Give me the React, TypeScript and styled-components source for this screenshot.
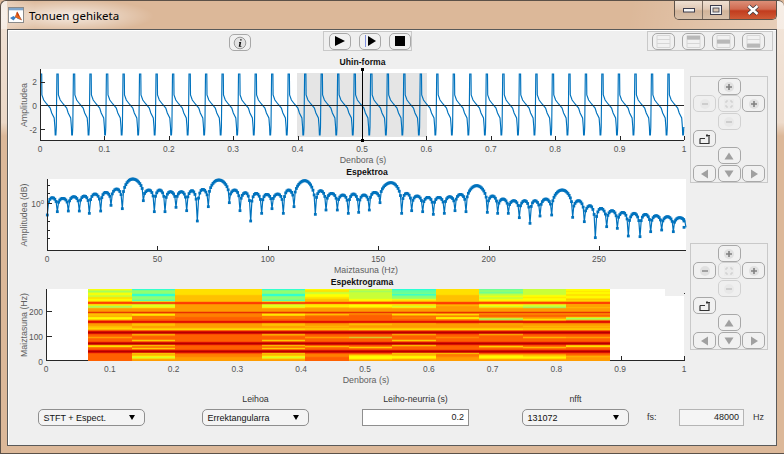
import React from "react";
import styled, { createGlobalStyle } from "styled-components";

const Global = createGlobalStyle`
  html, body { margin: 0; padding: 0; background: #dcb899; overflow: hidden; }
  * { box-sizing: border-box; }
`;

const Window = styled.div`
  width: 784px;
  height: 454px;
  display: flex;
  flex-direction: column;
  padding: 0 7px 7px 6px;
  border-radius: 6px 6px 0 0;
  border: 1px solid #5c5148;
  border-width: 1px 0 1px 1px;
  background:
    radial-gradient(ellipse 85px 17px at 68px 15px, rgba(255, 255, 255, 0.72), rgba(255, 255, 255, 0) 100%),
    linear-gradient(100deg, rgba(255, 255, 255, 0) 80%, rgba(255, 255, 255, 0.32) 100%) top / 100% 28px no-repeat,
    linear-gradient(180deg, rgba(255, 255, 255, 0.6), rgba(255, 255, 255, 0.45) 90%, rgba(255, 255, 255, 0)) left top / 6px 135px no-repeat,
    linear-gradient(180deg, rgba(255, 255, 255, 0.65), rgba(255, 255, 255, 0.5) 90%, rgba(255, 255, 255, 0)) right top / 7px 135px no-repeat,
    linear-gradient(90deg, rgba(255, 255, 255, 0.4), rgba(255, 255, 255, 0) 34px) top / 100% 28px no-repeat,
    #dcb899;
`;

const TitleBar = styled.div`
  height: 28px;
  flex: none;
  display: flex;
  align-items: flex-start;
  padding-left: 1px;
`;

const AppIcon = styled.svg`
  width: 16px;
  height: 16px;
  margin-top: 6px;
  flex: none;
`;

const TitleText = styled.span`
  font: 11.5px "Noto Sans", sans-serif;
  color: #000;
  margin: 6px 0 0 5px;
  line-height: 17px;
`;

const WinControls = styled.div`
  margin-left: auto;
  display: flex;
  height: 19px;
  border: 1px solid #5c5148;
  border-top: 0;
  border-radius: 0 0 5px 5px;
  overflow: hidden;
`;

const WinButton = styled.div<{ $w: number; $close?: boolean }>`
  width: ${(p) => p.$w}px;
  display: flex;
  align-items: center;
  justify-content: center;
  border-right: 1px solid #7b6c60;
  background: ${(p) =>
    p.$close
      ? "linear-gradient(180deg,#dc8f78 0,#d06a50 45%,#c23c1e 55%,#cf5b36 100%)"
      : "linear-gradient(180deg,#efe0d2 0,#e0c8b4 45%,#d2b49a 55%,#d8c0aa 100%)"};
  &:last-child { border-right: 0; }
`;

const Panel = styled.div`
  flex: 1;
  display: flex;
  flex-direction: column;
  background: #efefef;
  border: 1px solid #5a5a5a;
  box-shadow: inset 0 1px 0 #fff, inset 1px 0 0 #fff;
  width: 770px;
`;

const TopBar = styled.div`
  height: 26px;
  flex: none;
  display: flex;
  align-items: flex-start;
  padding: 1px 3px 0 221px;
`;

const ToolGroup = styled.div<{ $ml: string; $pad: number; $gap: number }>`
  height: 20px;
  display: flex;
  align-items: center;
  gap: ${(p) => p.$gap}px;
  padding-left: ${(p) => p.$pad}px;
  margin-left: ${(p) => p.$ml};
  border: 1px solid #c9c9c9;
`;

const ToolButton = styled.div<{ $w?: number; $dim?: boolean; $mt?: number }>`
  width: ${(p) => p.$w ?? 23}px;
  height: 17px;
  flex: none;
  display: flex;
  align-items: center;
  justify-content: center;
  border: 1px solid #a8a8a8;
  border-radius: 5px;
  background: #f1f1f1;
  margin-top: ${(p) => p.$mt ?? 0}px;
  opacity: ${(p) => (p.$dim ? 0.42 : 1)};
`;

const Workspace = styled.div`
  height: 332px;
  flex: none;
  display: flex;
`;

const ChartColumn = styled.div`
  width: 680px;
  flex: none;
  display: flex;
  flex-direction: column;
`;

const ChartSvg = styled.svg<{ $h: number }>`
  display: block;
  width: 680px;
  height: ${(p) => p.$h}px;
  flex: none;
`;

const SideColumn = styled.div`
  display: flex;
  flex-direction: column;
  gap: 60px;
  margin-left: 2px;
  padding-top: 20px;
`;

const NavPanel = styled.div`
  width: 78px;
  height: 107px;
  border: 1px solid #c9c9c9;
  padding: 1px 2px 0;
  display: grid;
  grid-template-columns: repeat(3, 24.5px);
  grid-template-rows: 17px 17px 18px 17px 18px 17px;
`;

const NavCell = styled.div<{ $c: number; $r: number }>`
  grid-column: ${(p) => p.$c};
  grid-row: ${(p) => p.$r};
`;

const Controls = styled.div`
  flex: 1;
  display: flex;
  align-items: flex-end;
  padding: 0 0 19px 30px;
`;

const Field = styled.div<{ $ml?: number; $w: number }>`
  width: ${(p) => p.$w}px;
  margin-left: ${(p) => p.$ml ?? 0}px;
  display: flex;
  flex-direction: column;
  flex: none;
`;

const FieldLabel = styled.div`
  font: 8.8px/12px "Liberation Sans", Arial, sans-serif;
  color: #333;
  text-align: center;
  margin-bottom: 4px;
`;

const Select = styled.div`
  height: 17px;
  display: flex;
  align-items: center;
  justify-content: space-between;
  padding: 0 9px 0 4.5px;
  border: 1px solid #8f8f8f;
  border-radius: 5px;
  background: #f4f4f4;
  font: 9px "Liberation Sans", Arial, sans-serif;
  color: #111;
`;

const Caret = styled.span`
  width: 0;
  height: 0;
  border-left: 3.5px solid transparent;
  border-right: 3.5px solid transparent;
  border-top: 5px solid #000;
`;

const ValueBox = styled.div<{ $w?: number; $ml?: number; $muted?: boolean }>`
  height: 17px;
  width: ${(p) => (p.$w ? `${p.$w}px` : "auto")};
  margin-left: ${(p) => p.$ml ?? 0}px;
  flex: none;
  padding: 0 4px;
  border: 1px solid ${(p) => (p.$muted ? "#b5b5b5" : "#8f8f8f")};
  background: ${(p) => (p.$muted ? "#f5f5f5" : "#fff")};
  text-align: right;
  font: 9px/15px "Liberation Sans", Arial, sans-serif;
  color: #222;
`;

const InlineLabel = styled.span<{ $w: number; $ml: number }>`
  width: ${(p) => p.$w}px;
  margin-left: ${(p) => p.$ml}px;
  flex: none;
  height: 17px;
  font: 9px/17px "Liberation Sans", Arial, sans-serif;
  color: #333;
`;

const TickText = styled.text`
  font: 8.4px "Liberation Sans", Arial, sans-serif;
  fill: #555;
`;

const AxisLabel = styled.text`
  font: 8.8px "Liberation Sans", Arial, sans-serif;
  fill: #606060;
  text-anchor: middle;
`;

const AxisTitle = styled.text`
  font: bold 8.6px "Liberation Sans", Arial, sans-serif;
  fill: #111;
  text-anchor: middle;
`;

const BLUE = "#0072bd";
const AX = "#262626";

/* ---------- waveform ---------- */
const PERIOD = 644 / 39;
const SHAPE: [number, number][] = [
  [0, 74], [1, 74], [1.2, 95], [3, 100], [6, 104], [9.5, 108], [11, 113], [13.5, 118],
  [14.2, 127], [14.5, 135], [15.2, 135], [15.6, 127], [16.2, 74],
];
function wavePoints() {
  const pts: string[] = [];
  for (let k = 0; k < 39; k++) {
    const x0 = 40.7 + k * PERIOD;
    for (const [t, y] of SHAPE) {
      const x = x0 + t;
      if (x > 684) {
        pts.push(`684,128`);
        return pts.join(" ");
      }
      pts.push(`${x.toFixed(1)},${y}`);
    }
  }
  return pts.join(" ");
}

/* ---------- spectrum ---------- */
const a = (zx: number, zy: number, top: number): [number, number, number] => [zx / 3, 160 + zy / 3, 160 + top / 3];
const b = (zx: number, zy: number, top: number): [number, number, number] => [400 + zx / 3, 170 + zy / 3, 170 + top / 3];
const LOBES: [number, number, number][] = [
  a(142, 165, 113), a(172, 155, 115), a(205, 153, 110), a(238, 153, 108), a(268, 160, 102),
  a(302, 153, 97), a(333, 136, 87), a(367, 146, 57), a(430, 122, 90), a(463, 155, 90),
  a(495, 155, 95), a(528, 142, 95), a(560, 152, 92), a(592, 183, 88), a(625, 140, 60),
  a(688, 128, 90), a(720, 152, 98), a(752, 183, 100), a(785, 160, 103), a(816, 146, 102),
  a(850, 160, 90), a(882, 140, 62), a(946, 163, 92), a(978, 150, 100), a(1012, 150, 105),
  a(1045, 160, 102), a(1076, 157, 105), a(1108, 150, 97), a(1140, 128, 68),
  b(5, 130, 70), b(35, 122, 78), b(68, 125, 82), b(100, 133, 82), b(133, 130, 80),
  b(165, 122, 73), b(198, 125, 47), b(262, 127, 78), b(293, 130, 87), b(325, 130, 92),
  b(358, 143, 92), b(390, 160, 92), b(420, 138, 87), b(455, 135, 60), b(518, 142, 92),
  b(553, 155, 107), b(586, 203, 115), b(620, 170, 122), b(652, 175, 127), b(685, 198, 130),
  b(720, 200, 133), b(752, 185, 137), b(785, 180, 140), b(820, 185, 143), b(858, 172, 0),
];
function spectrum() {
  const pts: [number, number][] = [];
  for (let i = 0; i < LOBES.length - 1; i++) {
    const [x0, y0, top] = LOBES[i];
    const [x1, y1] = LOBES[i + 1];
    const n = Math.max(8, Math.round((x1 - x0) / 1.2));
    for (let j = 0; j < n; j++) {
      const t = j / n;
      const base = y0 + (y1 - y0) * t;
      const s = Math.pow(Math.sin(Math.PI * t), 0.32);
      pts.push([x0 + (x1 - x0) * t, base + (top - base) * s]);
    }
  }
  pts.push([LOBES[LOBES.length - 1][0], LOBES[LOBES.length - 1][1]]);
  return pts;
}
const SPEC = spectrum();

/* ---------- spectrogram ---------- */
const PALETTE: Record<string, [number, number, number]> = {
  "0": [160, 0, 0], "1": [220, 0, 0], "2": [255, 40, 0], "3": [255, 96, 0], "4": [255, 128, 0], "5": [255, 156, 0],
  "6": [255, 192, 0], "7": [255, 224, 0], "8": [255, 255, 0], "9": [200, 255, 56], a: [144, 255, 112], b: [96, 255, 160], c: [32, 255, 224],
};
const rle = (s: string) =>
  s.split(" ").map((t) => {
    const [c, n] = t.split("*");
    return c.repeat(n ? Number(n) : 1);
  }).join("").replace(/000/g, "101");

const MID = "5*4 1";
const TYPES: Record<string, string> = {
  A: rle(`8 9 a 9 8 8 9 9 7 7 8 8 6 2*2 8 7 a 9 ${MID} 6*3 5 8 8 7 3 1*2 5*3 6*2 7 6 3 0*3 3*3 6 3*4 0*3 7 8 3*3 0*3 3 3*3 3*4`),
  B: rle(`c a a a a c c a a a a c 8 2*2 9 8 9 8 ${MID} 5 8 7 3 4 4 3 3 1*2 6*3 5 5 6 8 3 0*3 7 4 3*4 8 3 0*3 8 3 3 8 3 0*3 8 5 6 8 9 7 5 5`),
  C: rle(`7*6 6*7 2*2 5*8 1 4*4 3*4 1*2 5*5 6 8 3 0*3 3*8 0*3 3*5 0*3 3 4*3 5*4`),
  D: rle(`9 9 a 9 9 9 9 9 9 9 8 8 6 2*2 8 8 8 7 ${MID} 5 4 3 3 3*4 1*2 6 6 5 5 5 6 8 3 0*3 3*3 9 3*4 0*3 3 3 8 3 3 0*3 3 5 7 8*3 6 5`),
  E: rle(`c b b b a c b a a a 8 7 6 2*2 8 7 9 8 ${MID} 5 8 5 3 4 4 3 3 1*2 6 5 5 5 5 6 8 3 0*3 7 3*5 8 3 0*3 8 3 3 3 3 0*3 8 5 6 8 8 7 5 5`),
  F: rle(`8 7 7 9 9 8 8 8 7 7 6 6 6 2*2 8 7 8 6 ${MID} 4 7 4 3 3*4 1*2 5*3 6 5 6 7 3 0*3 3*3 6 3*4 0*3 3 7 3*3 0*3 3 4*3 3*4`),
  G: rle(`b a a b a 9 9 8 9 9 8 8 6 2*2 8 8 9 7 ${MID} 5 4 3 3 5 9 a 4 1*2 6 5 5 5 5 6 8 3 0*3 7 3*7 0*3 3 8 4 3 3 0*3 3 5 7 8 8 7 5 5`),
  H: rle(`9 9 9 9 9 9 8 8 7 8 8 8 6 2*2 8 9 9 a ${MID} 5 4 3 3 5 5 8 5 1*2 5*3 6 5 6 7 3 0*3 3*3 7 3*4 0*3 3 3 7 3 3 0*3 3 5 6 7 8 7 5 5`),
  I: rle(`8 8 7 8 8 7 7 8 8 7 6 7 6 2*2 6 5 5 6 ${MID} 5 4 3 3 8 a 9 3 1*2 5*3 6 5 6 7 3 0*3 3*3 6 3*4 0*3 7 8 3*3 0*3 3 3 4 6 5 5 5 5`),
  J: rle(`7*6 6*7 2*2 5 6 5 5 5*4 1 4 8 5 3 8 8 4 3 1*2 5*5 6 8 3 0*3 3*3 5 3*4 0*3 3*5 0*3 8 3 4 4 5*4`),
};
const rowColour = (s: string, r: number) => {
  const p = (i: number) => PALETTE[s[Math.max(0, Math.min(71, i))]];
  const [u, m, d] = [p(r - 1), p(r), p(r + 1)];
  const mix = (k: number) => Math.round(u[k] * 0.17 + m[k] * 0.66 + d[k] * 0.17);
  return `rgb(${mix(0)},${mix(1)},${mix(2)})`;
};
const BOUNDS = [88, 132, 175, 262, 305, 349, 392, 436, 479, 523, 566, 610];
const COLS = ["A", "B", "C", "B", "F", "D", "E", "J", "G", "H", "I"];

const Spectrogram = () => (
  <g shapeRendering="crispEdges">
    {COLS.map((k, ci) =>
      Array.from({ length: 72 }, (_, r) => (
        <rect key={`${ci}-${r}`} x={BOUNDS[ci]} y={289 + r} width={BOUNDS[ci + 1] - BOUNDS[ci]} height={1} fill={rowColour(TYPES[k], r)} />
      ))
    )}
  </g>
);

/* ---------- chart parts ---------- */
const XTicks = ({ items, axisY }: { items: [string, number][]; axisY: number }) => (
  <>
    {items.map(([l, x]) => (
      <TickText key={l} x={x} y={axisY + 12} textAnchor="middle">{l}</TickText>
    ))}
  </>
);

const WaveChart = () => {
  const ticks: [string, number][] = ["0", "0.1", "0.2", "0.3", "0.4", "0.5", "0.6", "0.7", "0.8", "0.9", "1"].map((l, i) => [l, 40 + i * 64.4]);
  return (
    <ChartSvg $h={112} viewBox="8 56 680 112">
      <rect x={40} y={69} width={644} height={71} fill="#fff" />
      <rect x={297} y={73} width={130} height={64} fill="#e5e5e5" />
      <AxisTitle x={362.5} y={65}>Uhin-forma</AxisTitle>
      <polyline points={wavePoints()} fill="none" stroke={BLUE} strokeWidth={1.15} />
      <g stroke={AX} shapeRendering="crispEdges">
        <line x1={40} y1={105.5} x2={684} y2={105.5} />
        <line x1={40.5} y1={69} x2={40.5} y2={141} />
        <line x1={40} y1={140.5} x2={684} y2={140.5} />
        {ticks.map(([l, x]) => (
          <line key={l} x1={Math.round(x) + 0.5} y1={136} x2={Math.round(x) + 0.5} y2={140} />
        ))}
        {[82, 105, 129].map((y) => (
          <line key={y} x1={41} y1={y + 0.5} x2={45} y2={y + 0.5} />
        ))}
      </g>
      <g fill="#000" shapeRendering="crispEdges">
        <rect x={361.5} y={69} width={1.2} height={71} />
        <rect x={360.5} y={68} width={3} height={3} />
        <rect x={360.5} y={139} width={3} height={3} />
      </g>
      <TickText x={37} y={85} textAnchor="end">2</TickText>
      <TickText x={37} y={109} textAnchor="end">0</TickText>
      <TickText x={37} y={133} textAnchor="end">-2</TickText>
      <XTicks items={ticks} axisY={140} />
      <AxisLabel x={363} y={163}>Denbora (s)</AxisLabel>
      <AxisLabel x={27} y={105} transform="rotate(-90 27 105)">Amplitudea</AxisLabel>
    </ChartSvg>
  );
};

const SpectrumChart = () => {
  const ticks: [string, number][] = ["0", "50", "100", "150", "200", "250"].map((l, i) => [l, 47 + i * 110.4]);
  return (
    <ChartSvg $h={110} viewBox="8 168 680 110">
      <rect x={47} y={179} width={639} height={71} fill="#fff" />
      <AxisTitle x={367} y={175}>Espektroa</AxisTitle>
      <polyline points={SPEC.map(([x, y]) => `${x.toFixed(1)},${y.toFixed(1)}`).join(" ")} fill="none" stroke={BLUE} strokeWidth={1.2} />
      <g fill={BLUE}>
        {SPEC.map(([x, y], i) => (
          <rect key={i} x={Math.min(x, 684) - 1.4} y={y - 1.4} width={2.8} height={2.8} />
        ))}
      </g>
      <g stroke={AX} shapeRendering="crispEdges">
        <line x1={47.5} y1={179} x2={47.5} y2={251} />
        <line x1={47} y1={250.5} x2={686} y2={250.5} />
        {ticks.map(([l, x]) => (
          <line key={l} x1={Math.round(x) + 0.5} y1={246} x2={Math.round(x) + 0.5} y2={250} />
        ))}
        {[185, 193, 203, 221, 230, 238].map((y) => (
          <line key={y} x1={48} y1={y + 0.5} x2={y === 203 ? 52 : 50} y2={y + 0.5} />
        ))}
      </g>
      <TickText x={44} y={206.5} textAnchor="end">10<tspan fontSize={6} dy={-3}>0</tspan></TickText>
      <XTicks items={ticks} axisY={250} />
      <AxisLabel x={366} y={273}>Maiztasuna (Hz)</AxisLabel>
      <AxisLabel x={27} y={215} transform="rotate(-90 27 215)">Amplitudea (dB)</AxisLabel>
    </ChartSvg>
  );
};

const GramChart = () => {
  const ticks: [string, number][] = ["0", "0.1", "0.2", "0.3", "0.4", "0.5", "0.6", "0.7", "0.8", "0.9", "1"].map((l, i) => [l, 46 + i * 63.8]);
  return (
    <ChartSvg $h={110} viewBox="8 278 680 110">
      <rect x={46} y={289} width={638} height={72} fill="#fff" />
      <rect x={665} y={289} width={20} height={7} fill="#efefef" />
      <rect x={684} y={293} width={1} height={1} fill="#333" />
      <AxisTitle x={362} y={285}>Espektrograma</AxisTitle>
      <g stroke={AX} shapeRendering="crispEdges">
        <line x1={46.5} y1={289} x2={46.5} y2={361} />
        <line x1={46} y1={360.5} x2={685} y2={360.5} />
        <line x1={621.5} y1={356} x2={621.5} y2={360} />
        <line x1={684.5} y1={356} x2={684.5} y2={360} />
        <line x1={47} y1={311.5} x2={52} y2={311.5} />
        <line x1={47} y1={336.5} x2={52} y2={336.5} />
      </g>
      <Spectrogram />
      <TickText x={43} y={314.5} textAnchor="end">200</TickText>
      <TickText x={43} y={339.5} textAnchor="end">100</TickText>
      <TickText x={43} y={364.5} textAnchor="end">0</TickText>
      <XTicks items={ticks} axisY={360} />
      <AxisLabel x={366} y={383}>Denbora (s)</AxisLabel>
      <AxisLabel x={27} y={325} transform="rotate(-90 27 325)">Maiztasuna (Hz)</AxisLabel>
    </ChartSvg>
  );
};

/* ---------- icons ---------- */
const Ic = ({ children, w = 14, h = 12 }: { children: React.ReactNode; w?: number; h?: number }) => (
  <svg width={w} height={h} viewBox={`0 0 ${w} ${h}`}>{children}</svg>
);
const ZoomIn = () => (
  <Ic>
    <circle cx={7} cy={6} r={5} fill="#e0e0e0" />
    <path d="M7 3v6M4 6h6" stroke="#808080" strokeWidth={1.6} />
  </Ic>
);
const ZoomOut = () => (
  <Ic>
    <circle cx={7} cy={6} r={5} fill="#e0e0e0" />
    <path d="M4 6h6" stroke="#909090" strokeWidth={1.6} />
  </Ic>
);
const Fit = () => (
  <Ic>
    <rect x={2} y={1} width={10} height={10} fill="#e6e6e6" />
    <path d="M4 5V3h2M8 3h2v2M10 7v2H8M6 9H4V7" fill="none" stroke="#9a9a9a" />
  </Ic>
);
const Arrow = ({ d }: { d: string }) => (
  <Ic>
    <path d={d} fill="#a0a0a0" />
  </Ic>
);
const Export = () => (
  <Ic>
    <path d="M2 5.5h5M2 5.5v5h9V2.5M8 2.5h4" fill="none" stroke="#333" strokeWidth={1.2} />
    <path d="M9 1v3" stroke="#333" strokeWidth={1} />
  </Ic>
);

const Nav = ({ fitDim = true, leftDim }: { fitDim?: boolean; leftDim: boolean }) => (
  <NavPanel>
    <NavCell $c={2} $r={1}><ToolButton><ZoomIn /></ToolButton></NavCell>
    <NavCell $c={1} $r={2}><ToolButton $dim={leftDim}><ZoomOut /></ToolButton></NavCell>
    <NavCell $c={2} $r={2}><ToolButton $dim={fitDim}><Fit /></ToolButton></NavCell>
    <NavCell $c={3} $r={2}><ToolButton><ZoomIn /></ToolButton></NavCell>
    <NavCell $c={2} $r={3}><ToolButton $dim $mt={1}><ZoomOut /></ToolButton></NavCell>
    <NavCell $c={1} $r={4}><ToolButton><Export /></ToolButton></NavCell>
    <NavCell $c={2} $r={5}><ToolButton><Arrow d="M7 2.5l4.5 7h-9z" /></ToolButton></NavCell>
    <NavCell $c={1} $r={6}><ToolButton><Arrow d="M3 6l7-4.5v9z" /></ToolButton></NavCell>
    <NavCell $c={2} $r={6}><ToolButton><Arrow d="M7 9.5l-4.5-7h9z" /></ToolButton></NavCell>
    <NavCell $c={3} $r={6}><ToolButton><Arrow d="M11 6L4 1.5v9z" /></ToolButton></NavCell>
  </NavPanel>
);

const Rows = ({ fill }: { fill: number }) => (
  <Ic w={15} h={13}>
    <path d="M1 .5h13v12H1zM1 4.5h13M1 8.5h13" fill="none" stroke="#d6d6d6" />
    {fill >= 0 && <rect x={1} y={1 + fill * 4} width={13} height={3.4} fill="#b8b8b8" />}
  </Ic>
);

export default function App() {
  return (
    <>
      <Global />
      <Window>
        <TitleBar>
          <AppIcon viewBox="0 0 16 16">
            <rect x={0.5} y={0.5} width={15} height={15} fill="#eaf0f6" stroke="#8a8a8a" />
            <rect x={1} y={1} width={14} height={2.5} fill="#7fa6cc" />
            <rect x={1} y={3.5} width={14} height={11.5} fill="#fff" />
            <path d="M2 11l3.5-2 1.5 1 2-5 1 1.5L14 13l-4-1-2-1.5-2.5 3z" fill="#3b7fc4" />
            <path d="M7 10l2-5.5 1 1.5L14 13.5l-3-1.5z" fill="#e8641b" />
            <path d="M9 4.5l1 1.5 1.5 4-2-2z" fill="#b8320f" />
          </AppIcon>
          <TitleText>Tonuen gehiketa</TitleText>
          <WinControls>
            <WinButton $w={28}>
              <svg width={12} height={6}><rect x={0.5} y={1.5} width={11} height={3.5} fill="#f6f6f6" stroke="#3c3c4c" /></svg>
            </WinButton>
            <WinButton $w={27}>
              <svg width={12} height={10}><rect x={0.5} y={0.5} width={11} height={9} fill="#f1f1f1" stroke="#3c3c4c" /><rect x={3} y={3} width={6} height={4} fill="#d8c4b0" stroke="#3c3c4c" strokeWidth={0.8} /></svg>
            </WinButton>
            <WinButton $w={46} $close>
              <svg width={14} height={12}><path d="M2.5 2l9 8M11.5 2l-9 8" stroke="#39393f" strokeWidth={4} /><path d="M2.5 2l9 8M11.5 2l-9 8" stroke="#fff" strokeWidth={2.4} /></svg>
            </WinButton>
          </WinControls>
        </TitleBar>
        <Panel>
          <TopBar>
            <ToolButton $w={22} $mt={3}>
              <Ic w={14} h={14}>
                <circle cx={7} cy={7} r={5.8} fill="#e2e2e2" stroke="#9a9a9a" />
                <path d="M7.2 3.2h1.4v1.4H7.2zM6 6h2.2L7.4 10h1v.8H5.7l.8-4H6z" fill="#111" />
              </Ic>
            </ToolButton>
            <ToolGroup $ml="72px" $pad={5} $gap={8}>
              <ToolButton $w={22}><Ic><path d="M2 1l10 5-10 5z" fill="#000" /></Ic></ToolButton>
              <ToolButton $w={22}>
                <Ic><path d="M2.5 0v12" stroke="#8090e0" /><path d="M5 1l8 5-8 5z" fill="#000" /></Ic>
              </ToolButton>
              <ToolButton $w={22}><Ic><rect x={2} y={1} width={10} height={10} fill="#000" /></Ic></ToolButton>
            </ToolGroup>
            <ToolGroup $ml="auto" $pad={4} $gap={7}>
              <ToolButton><Rows fill={-1} /></ToolButton>
              <ToolButton><Rows fill={0} /></ToolButton>
              <ToolButton><Rows fill={1} /></ToolButton>
              <ToolButton><Rows fill={2} /></ToolButton>
              <span style={{ width: 0 }} />
            </ToolGroup>
          </TopBar>
          <Workspace>
            <ChartColumn>
              <WaveChart />
              <SpectrumChart />
              <GramChart />
            </ChartColumn>
            <SideColumn>
              <Nav leftDim />
              <Nav leftDim={false} />
            </SideColumn>
          </Workspace>
          <Controls>
            <Field $w={107}>
              <Select>STFT + Espect.<Caret /></Select>
            </Field>
            <Field $w={107} $ml={57}>
              <FieldLabel>Leihoa</FieldLabel>
              <Select>Errektangularra<Caret /></Select>
            </Field>
            <Field $w={107} $ml={53}>
              <FieldLabel>Leiho-neurria (s)</FieldLabel>
              <ValueBox>0.2</ValueBox>
            </Field>
            <Field $w={107} $ml={53}>
              <FieldLabel>nfft</FieldLabel>
              <Select>131072<Caret /></Select>
            </Field>
            <InlineLabel $w={32} $ml={18}>fs:</InlineLabel>
            <ValueBox $w={65} $muted>48000</ValueBox>
            <InlineLabel $w={14} $ml={9}>Hz</InlineLabel>
          </Controls>
        </Panel>
      </Window>
    </>
  );
}
